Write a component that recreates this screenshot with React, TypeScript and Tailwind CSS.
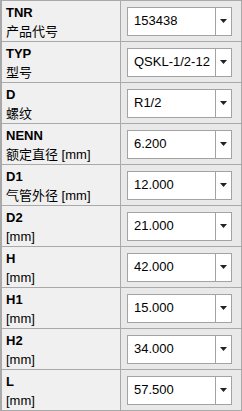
import React from 'react';

const rows = [
    { code: 'TNR', name: '产品代号', value: '153438' },
    { code: 'TYP', name: '型号', value: 'QSKL-1/2-12' },
    { code: 'D', name: '螺纹', value: 'R1/2' },
    { code: 'NENN', name: '额定直径 [mm]', value: '6.200' },
    { code: 'D1', name: '气管外径 [mm]', value: '12.000' },
    { code: 'D2', name: '[mm]', value: '21.000' },
    { code: 'H', name: '[mm]', value: '42.000' },
    { code: 'H1', name: '[mm]', value: '15.000' },
    { code: 'H2', name: '[mm]', value: '34.000' },
    { code: 'L', name: '[mm]', value: '57.500' },
];

const font = { fontFamily: '"Liberation Sans", "Noto Sans CJK SC", sans-serif' };

const Row = ({ row }: any) => {
    return (
        <div className="flex h-[41px] border-b border-[#a9a9a9]">
            <div className="w-[121px] shrink-0 border-l-2 border-r border-[#a9a9a9] bg-[#f0f0f0] pl-[4px] pt-[3px]">
                <div className="text-[13px] font-bold leading-[18px] text-black">{row.code}</div>
                <div className="text-[13px] leading-[19px] text-black">{row.name}</div>
            </div>
            <div className="flex flex-1 items-center border-r border-[#a9a9a9] bg-[#e9e9e9] pl-[6px]">
                <div className="flex h-[29px] w-[105px] border border-[#a3a3a3] bg-white">
                    <div className="flex flex-1 items-center overflow-hidden whitespace-nowrap pl-[6px] text-[13px] text-black">{row.value}</div>
                    <div className="flex w-[16px] shrink-0 items-center justify-center border-l border-[#a3a3a3]">
                        <svg width="7" height="4" viewBox="0 0 7 4">
                            <path d="M0 0H7L3.5 4Z" fill="#222" />
                        </svg>
                    </div>
                </div>
            </div>
        </div>
    );
};

export default function App() {
    return (
        <div className="w-[242px] h-[411px] overflow-hidden bg-white" style={font}>
            <div className="border-t border-[#a9a9a9]">
                {rows.map((r) => (
                    <Row key={r.code} row={r} />
                ))}
            </div>
        </div>
    );
}
